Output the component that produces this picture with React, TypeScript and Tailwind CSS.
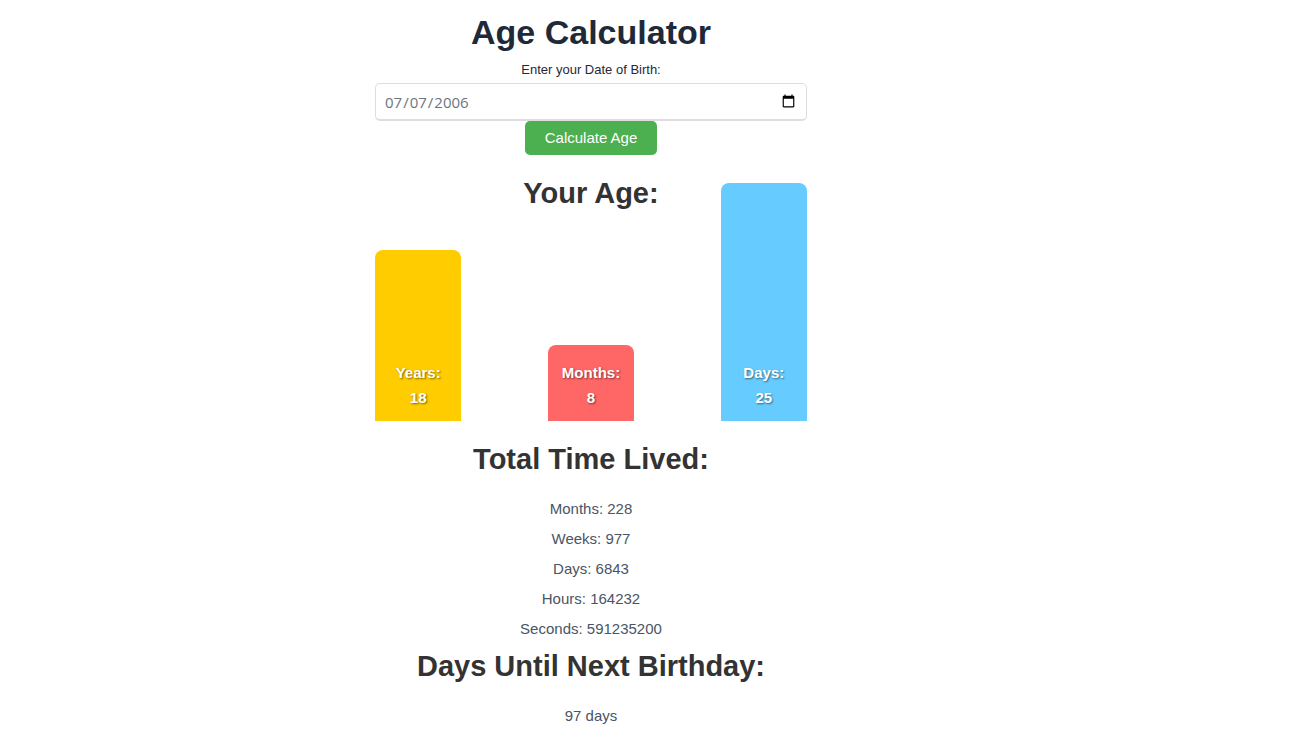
import { useState } from 'react'

const bars = [
  { name: 'Years', value: 18, style: 'h-[171px] bg-[#ffcc00]' },
  { name: 'Months', value: 8, style: 'h-[76px] bg-[#ff6666]' },
  { name: 'Days', value: 25, style: 'h-[238px] bg-[#66ccff]' },
]

const totals = [
  { name: 'Months', value: 228 },
  { name: 'Weeks', value: 977 },
  { name: 'Days', value: 6843 },
  { name: 'Hours', value: 164232 },
  { name: 'Seconds', value: 591235200 },
]

export default function App() {
  const [birthDate, setBirthDate] = useState('2006-07-07')

  return (
    <main className="bg-white pt-3 pr-[118px] font-['Liberation_Sans',Arial,sans-serif] text-[15px] leading-[22px] text-gray-600">
      <div className="mx-auto max-w-[432px] text-center">
        <h1 className="text-[34px] leading-10 font-bold text-gray-800">Age Calculator</h1>

        <form onSubmit={(e) => e.preventDefault()} className="mt-2 flex flex-col items-center">
          <label htmlFor="dob" className="mb-1 text-[13px] leading-[19px] text-gray-800">
            Enter your Date of Birth:
          </label>
          <input
            id="dob"
            type="date"
            value={birthDate}
            onChange={(e) => setBirthDate(e.target.value)}
            className="h-[38px] w-full rounded-[5px] border border-b-2 border-[#dddddd] bg-white px-2 font-['Open_Sans',sans-serif] text-[15px] text-[#6c757d]"
          />
          <button
            type="submit"
            className="h-[34px] rounded-[5px] bg-[#4caf50] px-5 text-[15px] text-white hover:bg-[#45a049]"
          >
            Calculate Age
          </button>
        </form>

        <h2 className="mt-5 text-[29px] leading-9 font-bold text-[#333333]">Your Age:</h2>
        {/* tall bars grow up past the chart, next to the heading */}
        <div className="flex h-[210px] items-end justify-between">
          {bars.map((bar) => (
            <div
              key={bar.name}
              className={`${bar.style} flex w-1/5 flex-col justify-end rounded-t-lg pb-[11px] leading-[25px] font-bold text-white [text-shadow:1px_1px_2px_rgba(0,0,0,0.5)]`}
            >
              <span>{bar.name}:</span>
              <span>{bar.value}</span>
            </div>
          ))}
        </div>

        <h2 className="mt-5 mb-[21px] text-[29px] leading-9 font-bold text-[#333333]">Total Time Lived:</h2>
        <ul className="flex flex-col gap-2">
          {totals.map((total) => (
            <li key={total.name}>
              {total.name}: {total.value}
            </li>
          ))}
        </ul>

        <h2 className="mt-2 mb-[21px] text-[29px] leading-9 font-bold text-[#333333]">Days Until Next Birthday:</h2>
        <p>97 days</p>
      </div>
    </main>
  )
}
